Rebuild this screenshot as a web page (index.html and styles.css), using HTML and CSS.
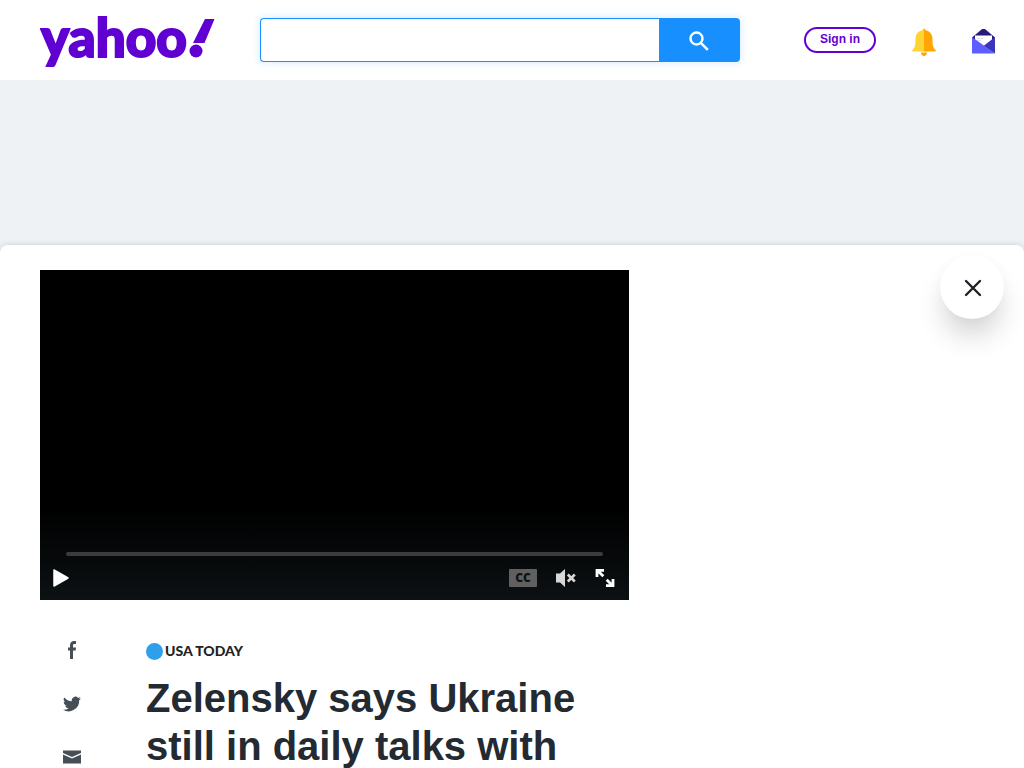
FILE: index.html
```html
<!DOCTYPE html>
<html lang="en">

<head>
	<meta charset="UTF-8">
	<meta name="viewport" content="width=device-width, initial-scale=1.0">
	<title>Zelensky says Ukraine still in daily talks with</title>
	<link rel="stylesheet" href="styles.css">
</head>

<body>

	<header class="header">
		<a class="logo" href="#">
			<svg width="180" height="80" viewBox="0 0 180 80">
				<text class="logo-word" x="1" y="57">yahoo</text>
				<path d="M165 19h9.500l-10 24h-11.500z" />
				<circle cx="156" cy="51" r="6.500" />
			</svg>
		</a>

		<form class="search">
			<input class="search-input" type="text" aria-label="Search">
			<button class="search-btn" type="button" aria-label="Search">
				<svg width="20" height="20" viewBox="0 0 20 20" fill="none" stroke="#fff">
					<circle cx="7.500" cy="7.500" r="6" stroke-width="2.400" />
					<path d="M11.800 11.800l7 7" stroke-width="2.600" />
				</svg>
			</button>
		</form>

		<nav class="tools">
			<a class="sign-in" href="#">Sign in</a>
			<a class="tool" href="#" aria-label="Notifications">
				<svg width="24" height="28" viewBox="0 0 24 28">
					<path d="M9 24.500h6c0 4.500-6 4.500-6 0z" fill="#ffa700" />
					<path d="M12 .5c-1 0-1.500 1-1.500 1.800C6 3 3.500 6.500 3.500 11c0 6-.5 8.500-3 11-.8.9-.4 1.500.8 1.500H12z" fill="#ffd333" />
					<path d="M12 .5c1 0 1.500 1 1.500 1.800C18 3 20.500 6.500 20.500 11c0 6 .5 8.500 3 11 .8.9.4 1.500-.8 1.500H12z" fill="#ffa700" />
				</svg>
			</a>
			<a class="tool" href="#" aria-label="Mail">
				<svg width="24" height="26" viewBox="0 0 24 26">
					<path d="M0 8.500L9.500.500q2-1.500 4 0L23 8.500v5H0z" fill="#2a1a7a" />
					<path d="M3 6.500h17v8L11.500 18 3 13.500z" fill="#fff" />
					<path d="M5 9.500h6M5 11.500h4" stroke="#e0e4e9" />
					<path d="M23 8v16.500L11.500 17z" fill="#3d35b8" />
					<path d="M0 8l23 16.500H0z" fill="#5d5eff" />
				</svg>
			</a>
		</nav>
	</header>

	<div class="ad-space"></div>

	<main class="page">
		<button class="close" type="button" aria-label="Close">
			<svg width="18" height="18" viewBox="0 0 18 18" stroke="#1d2228" stroke-width="2.400" stroke-linecap="round">
				<path d="M2 2l14 14M16 2L2 16" />
			</svg>
		</button>

		<div class="column">
			<section class="player">
				<div class="progress"></div>
				<div class="controls">
					<button class="control play" type="button" aria-label="Play">
						<svg width="18" height="20" viewBox="0 0 18 20">
							<path d="M2 2l14 8-14 8z" fill="#fff" stroke="#fff" stroke-width="1.500" stroke-linejoin="round" />
						</svg>
					</button>
					<button class="control cc" type="button">CC</button>
					<button class="control" type="button" aria-label="Unmute">
						<svg width="20" height="20" viewBox="0 0 20 20" fill="#d8d8d8">
							<path d="M0 5.500h4l5-4.500v18L4 14.500H0z" />
							<path d="M11.800 6.500l7 7M18.800 6.500l-7 7" stroke="#d8d8d8" stroke-width="2.600" />
						</svg>
					</button>
					<button class="control" type="button" aria-label="Full screen">
						<svg width="20" height="20" viewBox="0 0 20 20" fill="none" stroke="#fff" stroke-width="2.800">
							<path d="M2 9V2.300H9M2.300 2.300l6 6" />
							<path d="M18 11v6.700H11M17.700 17.700l-6-6" />
						</svg>
					</button>
				</div>
			</section>

			<article class="article">
				<div class="share">
					<a href="#" aria-label="Facebook">
						<svg width="18" height="18" viewBox="0 0 18 18">
							<path d="M7 18v-8.500H5v-3h2V4.500C7 1.500 8.500 0 11 0h2v3h-1.500C10.300 3 10 3.500 10 4.500v2h3l-.4 3H10V18z" />
						</svg>
					</a>
					<a href="#" aria-label="Twitter">
						<svg width="18" height="18" viewBox="0 0 24 24">
							<path d="M24 4.600a10 10 0 0 1-2.800.8 5 5 0 0 0 2.100-2.700 10 10 0 0 1-3.100 1.200 4.900 4.900 0 0 0-8.400 4.500A14 14 0 0 1 1.700 3.200a4.900 4.900 0 0 0 1.500 6.500 5 5 0 0 1-2.200-.6 4.900 4.900 0 0 0 3.900 4.900 5 5 0 0 1-2.200.1 4.900 4.900 0 0 0 4.600 3.400A9.900 9.900 0 0 1 0 19.500 14 14 0 0 0 21.500 7.100 10 10 0 0 0 24 4.600z" />
						</svg>
					</a>
					<a href="#" aria-label="Email">
						<svg width="18" height="18" viewBox="0 0 18 18">
							<path d="M0 1.500h18V4L9 8 0 4z" />
							<path d="M0 5.500L9 9.500l9-4V14.500H0z" />
						</svg>
					</a>
				</div>

				<div class="story">
					<a class="source" href="#">
						<span class="source-dot"></span>
						<span>USA TODAY</span>
					</a>
					<h1 class="title">Zelensky says Ukraine still in daily talks with</h1>
				</div>
			</article>
		</div>
	</main>

</body>

</html>
```
FILE: styles.css
```css
* {
	box-sizing: border-box;
}

body {
	margin: 0;
	background: #fff;
	color: #232a31;
	font-family: "Liberation Sans", Arial, sans-serif;
}

a {
	color: inherit;
	text-decoration: none;
}

button {
	padding: 0;
	border: 0;
	cursor: pointer;
}

svg {
	display: block;
}

/* header */
.header {
	display: flex;
	align-items: center;
	height: 80px;
	padding: 0 28px 0 40px;
}

.logo {
	flex: 0 0 220px;
	fill: #6001d2;
}

.logo-word {
	font-family: Lato, sans-serif;
	font-size: 53px;
	font-weight: 900;
	stroke: #6001d2;
	stroke-width: 2px;
}

.search {
	display: flex;
	flex: 0 1 480px;
	height: 44px;
	border-radius: 4px;
	box-shadow: 0 0 10px rgba(24, 143, 255, .2);
}

.search-input {
	flex: 1;
	min-width: 0;
	padding: 0 12px;
	border: 1px solid #188fff;
	border-right: 0;
	border-radius: 4px 0 0 4px;
	font-size: 16px;
	outline: none;
}

.search-btn {
	display: flex;
	align-items: center;
	justify-content: center;
	width: 81px;
	padding: 2px 1px 0 0;
	border-radius: 0 4px 4px 0;
	background: #188fff;
}

.tools {
	display: flex;
	align-items: center;
	gap: 36px;
	margin-left: auto;
}

.sign-in {
	width: 72px;
	height: 26px;
	border: 2px solid #6001d2;
	border-radius: 13px;
	color: #6001d2;
	font-size: 12px;
	font-weight: bold;
	line-height: 20px;
	text-align: center;
}

.tool {
	width: 24px;
	padding-top: 3px;
}

.ad-space {
	height: 165px;
	background: #eef2f5;
}

/* article page */
.page {
	position: relative;
	padding: 25px 40px 0;
	border-radius: 8px 8px 0 0;
	background: #fff;
	box-shadow: 0 0 6px rgba(0, 0, 0, .15), 0 0 0 8px #eef2f5;
}

.close {
	position: absolute;
	top: 10px;
	right: 20px;
	display: flex;
	align-items: center;
	justify-content: center;
	width: 64px;
	height: 64px;
	padding: 1px 0 0 1px;
	border-radius: 50%;
	background: #fff;
	box-shadow: 0 20px 28px -4px rgba(0, 0, 0, .18), 0 0 8px rgba(0, 0, 0, .03);
}

.column {
	max-width: 589px;
}

/* video */
.player {
	display: flex;
	flex-direction: column;
	justify-content: flex-end;
	aspect-ratio: 589 / 330;
	background: linear-gradient(#000 72%, #0c1113);
}

.progress {
	height: 4px;
	margin: 0 26px;
	border-radius: 2px;
	background: #3c3c3c;
}

.controls {
	display: flex;
	align-items: center;
	gap: 19px;
	height: 44px;
	padding: 0 14px 0 12px;
}

.control {
	background: none;
}

.play {
	margin-right: auto;
}

.cc {
	width: 28px;
	height: 18px;
	border-radius: 1px;
	background: #606060;
	color: #111;
	font: 900 12px/18px "Noto Sans", sans-serif;
}

/* share + headline */
.article {
	display: flex;
	gap: 42px;
	padding-top: 41px;
}

.share {
	display: flex;
	flex: 0 0 64px;
	flex-direction: column;
	align-items: center;
	gap: 36px;
	fill: #464e56;
}

.source {
	display: flex;
	align-items: center;
	gap: 2px;
	height: 20px;
	color: #222;
	font: 900 14px/20px Lato, sans-serif;
}

.source-dot {
	width: 17px;
	height: 17px;
	border-radius: 50%;
	background: #2f9fec;
}

.title {
	margin: 13px 0 0;
	font-size: 40px;
	line-height: 48px;
}
```
